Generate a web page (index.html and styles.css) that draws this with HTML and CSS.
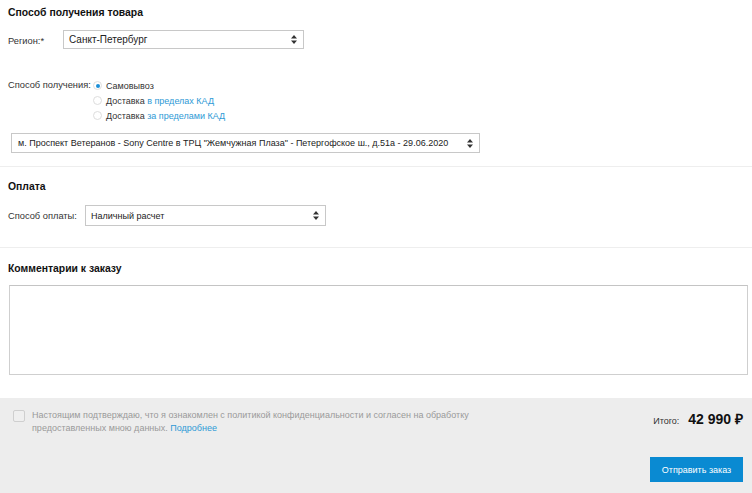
FILE: index.html
```html
<!DOCTYPE html>
<html lang="ru">
<head>
<meta charset="utf-8">
<link rel="stylesheet" href="styles.css">
</head>
<body>
<div class="page">
  <section class="sec sec-delivery">
    <h2 class="title">Способ получения товара</h2>
    <div class="row row-region">
      <span class="label label-region">Регион:*</span>
      <div class="select select-region"><span class="sel-text">Санкт-Петербург</span><svg class="arr" width="6" height="9" viewBox="0 0 6 9"><path d="M3 0L6 3.5H0Z M3 9L6 5.5H0Z" fill="#333"/></svg></div>
    </div>
    <div class="row row-method">
      <span class="label label-method">Способ получения:</span>
      <div class="radios">
        <div class="radio-row"><span class="radio on"></span><span>Самовывоз</span></div>
        <div class="radio-row"><span class="radio"></span><span>Доставка <a class="link">в пределах КАД</a></span></div>
        <div class="radio-row"><span class="radio"></span><span>Доставка <a class="link">за пределами КАД</a></span></div>
      </div>
    </div>
    <div class="select select-store"><span class="sel-text">м. Проспект Ветеранов - Sony Centre в ТРЦ "Жемчужная Плаза" - Петергофское ш., д.51а - 29.06.2020</span><svg class="arr" width="6" height="9" viewBox="0 0 6 9"><path d="M3 0L6 3.5H0Z M3 9L6 5.5H0Z" fill="#333"/></svg></div>
  </section>
  <section class="sec sec-pay">
    <h2 class="title">Оплата</h2>
    <div class="row row-pay">
      <span class="label label-pay">Способ оплаты:</span>
      <div class="select select-pay"><span class="sel-text">Наличный расчет</span><svg class="arr" width="6" height="9" viewBox="0 0 6 9"><path d="M3 0L6 3.5H0Z M3 9L6 5.5H0Z" fill="#333"/></svg></div>
    </div>
  </section>
  <section class="sec sec-comment">
    <h2 class="title">Комментарии к заказу</h2>
    <div class="textarea"></div>
  </section>
  <footer class="footer">
    <div class="agree">
      <span class="checkbox"></span>
      <p class="agree-text">Настоящим подтверждаю, что я ознакомлен с политикой конфиденциальности и согласен на обработку предоставленных мною данных. <a class="link">Подробнее</a></p>
    </div>
    <div class="total-col">
      <div class="total"><span class="total-label">Итого:</span><span class="total-sum">42 990 ₽</span></div>
      <button class="btn">Отправить заказ</button>
    </div>
  </footer>
</div>
</body>
</html>
```
FILE: styles.css
```css
html, body {
  margin: 0;
  padding: 0;
  background: #fff;
}
body {
  font-family: "Liberation Sans", Arial, sans-serif;
  font-size: 9px;
  color: #222;
  width: 752px;
  height: 493px;
  overflow: hidden;
}
.page {
  display: flex;
  flex-direction: column;
  height: 493px;
}
.sec {
  padding: 0 8px;
  border-bottom: 1px solid #eeeeee;
}
.title {
  margin: 0;
  font-size: 10.4px;
  font-weight: bold;
  color: #111;
  line-height: 14px;
}
.sec-delivery {
  padding-top: 6px;
  height: 160px;
}
.row {
  display: flex;
  align-items: flex-start;
}
.row-region {
  margin-top: 10px;
  align-items: center;
}
.label {
  color: #333;
  font-size: 9.3px;
}
.label-region {
  width: 55px;
  padding-top: 3px;
}
.select {
  box-sizing: border-box;
  height: 19px;
  border: 1px solid #c8c8c8;
  display: flex;
  align-items: center;
  justify-content: space-between;
  padding: 0 6px 0 5px;
  background: #fff;
  font-size: 9px;
  color: #222;
}
.select .arr {
  flex: none;
}
.select-region {
  width: 241px;
  font-size: 10px;
}
.row-method {
  margin-top: 30px;
}
.label-method {
  width: 85px;
  line-height: 13px;
}
.radios {
  display: flex;
  flex-direction: column;
  gap: 2px;
}
.radio-row {
  display: flex;
  align-items: center;
  gap: 4px;
  height: 13px;
  font-size: 9px;
  color: #333;
}
.radio {
  box-sizing: border-box;
  width: 9px;
  height: 9px;
  border-radius: 50%;
  border: 1px solid #ddd;
  background: #fff;
  position: relative;
}
.radio.on::after {
  content: "";
  position: absolute;
  left: 1.5px;
  top: 1.5px;
  width: 4px;
  height: 4px;
  border-radius: 50%;
  background: #1a8fd8;
}
.link {
  color: #2e9ad6;
  text-decoration: none;
}
.select-store {
  margin-top: 11px;
  margin-left: 3px;
  width: 469px;
  height: 20px;
  padding-left: 6px;
}
.sec-pay {
  padding-top: 13px;
  height: 67px;
}
.row-pay {
  margin-top: 11px;
  align-items: center;
}
.label-pay {
  width: 77px;
}
.select-pay {
  width: 241px;
  height: 21px;
}
.sec-comment {
  border-bottom: none;
  padding-top: 14px;
  padding-left: 8px;
  height: 136px;
}
.textarea {
  box-sizing: border-box;
  margin-top: 9px;
  margin-left: 1px;
  width: 739px;
  height: 90px;
  border: 1px solid #cfcfcf;
  border-top-color: #c4c4c4;
  background: #fff;
}
.footer {
  flex: 1;
  background: #ededed;
  display: flex;
  justify-content: space-between;
  padding: 11px 9px 0 13px;
}
.agree {
  display: flex;
  align-items: flex-start;
  gap: 7px;
}
.checkbox {
  flex: none;
  box-sizing: border-box;
  width: 12px;
  height: 12px;
  border: 1px solid #cfcfcf;
  border-radius: 2px;
  background: #efefef;
  margin-top: 1px;
}
.agree-text {
  margin: 0;
  width: 450px;
  color: #9a9a9a;
  font-size: 9px;
  line-height: 13px;
}
.total-col {
  display: flex;
  flex-direction: column;
  align-items: flex-end;
}
.total {
  display: flex;
  align-items: baseline;
  gap: 9px;
  margin-top: 0;
}
.total-label {
  font-size: 9px;
  color: #333;
}
.total-sum {
  font-size: 14px;
  font-weight: bold;
  color: #111;
}
.btn {
  margin-top: 29px;
  width: 93px;
  height: 25px;
  border: none;
  background: #0a8ad2;
  color: #fff;
  font-family: "Liberation Sans", Arial, sans-serif;
  font-size: 9px;
  padding: 0;
}
```
